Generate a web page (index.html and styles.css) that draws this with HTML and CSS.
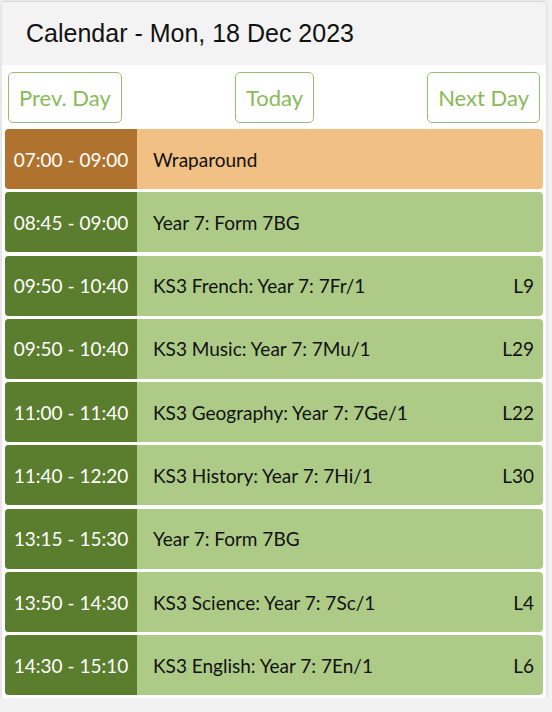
FILE: index.html
```html
<!DOCTYPE html>
<html lang="en">
  <head>
    <meta charset="UTF-8" />
    <meta name="viewport" content="width=device-width, initial-scale=1.0" />
    <title>Calendar</title>
    <link rel="stylesheet" href="styles.css">
  </head>
  <body>
    <div class="card">
      <header>
        <h1>Calendar - Mon, 18 Dec 2023</h1>
      </header>
      <nav class="day-nav">
        <button>Prev. Day</button>
        <button>Today</button>
        <button>Next Day</button>
      </nav>
      <div class="events">
        <div class="event wrap">
          <span class="time">07:00 - 09:00</span>
          <span class="title">Wraparound</span>
          <span class="room"></span>
        </div>
        <div class="event">
          <span class="time">08:45 - 09:00</span>
          <span class="title">Year 7: Form 7BG</span>
          <span class="room"></span>
        </div>
        <div class="event">
          <span class="time">09:50 - 10:40</span>
          <span class="title">KS3 French: Year 7: 7Fr/1</span>
          <span class="room">L9</span>
        </div>
        <div class="event">
          <span class="time">09:50 - 10:40</span>
          <span class="title">KS3 Music: Year 7: 7Mu/1</span>
          <span class="room">L29</span>
        </div>
        <div class="event">
          <span class="time">11:00 - 11:40</span>
          <span class="title">KS3 Geography: Year 7: 7Ge/1</span>
          <span class="room">L22</span>
        </div>
        <div class="event">
          <span class="time">11:40 - 12:20</span>
          <span class="title">KS3 History: Year 7: 7Hi/1</span>
          <span class="room">L30</span>
        </div>
        <div class="event">
          <span class="time">13:15 - 15:30</span>
          <span class="title">Year 7: Form 7BG</span>
          <span class="room"></span>
        </div>
        <div class="event">
          <span class="time">13:50 - 14:30</span>
          <span class="title">KS3 Science: Year 7: 7Sc/1</span>
          <span class="room">L4</span>
        </div>
        <div class="event">
          <span class="time">14:30 - 15:10</span>
          <span class="title">KS3 English: Year 7: 7En/1</span>
          <span class="room">L6</span>
        </div>
      </div>
    </div>
  </body>
</html>
```

FILE: styles.css
```css
body {
  font-family: Lato, "Noto Sans", sans-serif;
  background-color: #f2f2f2;
  margin: 0;
  padding: 1px 6px 0 2px;
}
.card {
  background-color: white;
  border-top: 1px solid #d8d8d8;
  box-shadow: 0 1px 4px rgba(0, 0, 0, 0.15);
  padding-bottom: 3px;
}
header {
  background-color: #f3f3f3;
  height: 63px;
  display: flex;
  align-items: center;
  padding: 0 24px;
}
header h1 {
  margin: 0;
  font-family: "Liberation Sans", Arial, sans-serif;
  font-weight: normal;
  font-size: 25px;
  color: #111;
}
.day-nav {
  display: flex;
  justify-content: space-between;
  padding: 7px 6px 6px 6px;
}
.day-nav button {
  height: 51px;
  padding: 0 10px;
  background-color: white;
  border: 1px solid #93c070;
  border-radius: 5px;
  color: #88ba58;
  font-family: Lato, sans-serif;
  font-size: 22px;
}
.events {
  display: flex;
  flex-direction: column;
  gap: 3.3px;
  padding: 0 3px;
}
.event {
  display: flex;
  align-items: center;
  height: 60px;
  border-radius: 4px;
  overflow: hidden;
  background-color: #adcb87;
  font-size: 19px;
  color: #111;
}
.event .time {
  width: 132px;
  height: 100%;
  display: flex;
  align-items: center;
  justify-content: center;
  background-color: #5a7d2e;
  color: white;
}
.event .title {
  flex: 1;
  padding-left: 16px;
}
.event .room {
  padding-right: 9px;
}
.event.wrap {
  background-color: #f0c084;
}
.event.wrap .time {
  background-color: #b0732f;
}
```
